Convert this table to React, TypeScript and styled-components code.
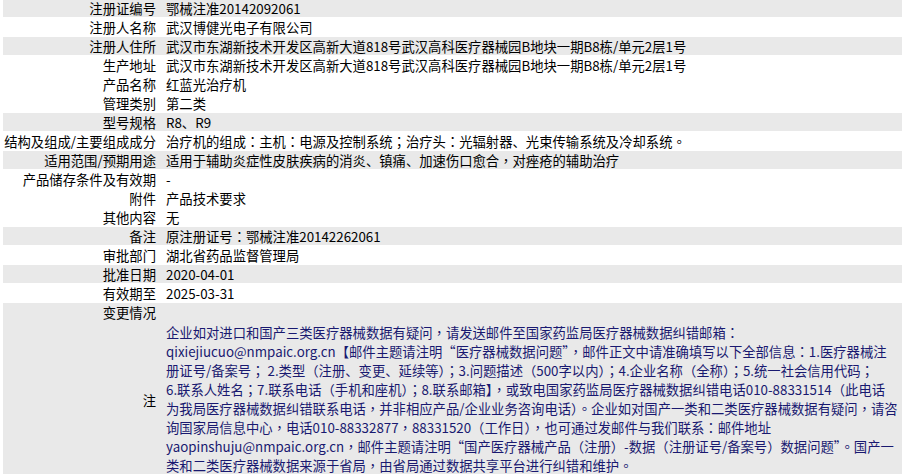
import styled, { createGlobalStyle } from 'styled-components';

const GlobalStyle = createGlobalStyle`
  html, body {
    margin: 0;
    padding: 0;
    background: #fff;
    overflow: hidden;
  }
  body {
    font-family: "Noto Sans CJK SC", "Liberation Sans", sans-serif;
    font-size: 13.33px;
    color: #000;
  }
`;

const Table = styled.div`
  width: 899px;
  margin: -1px 0 0 3px;
  display: flex;
  flex-direction: column;
`;

const Row = styled.div<{ $shade?: boolean; $joined?: boolean }>`
  display: grid;
  grid-template-columns: 157px 1fr;
  align-items: center;
  background: ${(p) => (p.$shade ? '#e9e9e9' : '#fff')};
  border-bottom: 1px solid ${(p) => (p.$joined ? '#e9e9e9' : '#fff')};
`;

const Label = styled.div`
  text-align: right;
  padding: 2px 4px 0 0;
  line-height: 16px;
  white-space: nowrap;
`;

const Value = styled.div`
  padding: 2px 0 0 6px;
  line-height: 16px;
  min-height: 16px;
  white-space: nowrap;
`;

const Notice = styled.div`
  padding: 1px 0 3px 6px;
  color: #191970;
  line-height: 19px;
`;

const NoticeLine = styled.span`
  display: block;
  white-space: nowrap;
`;

// centred full-width punctuation, as in the original rendering
const Punct = styled.span`
  font-family: "Noto Sans CJK TC", "Noto Sans CJK SC", sans-serif;
`;

const withPunct = (text: string) =>
  text.split(/([：；，。])/).map((part, i) =>
    /^[：；，。]$/.test(part) ? <Punct key={i}>{part}</Punct> : part
  );

interface Item {
  label: string;
  value: string;
  shade?: boolean;
}

const items: Item[] = [
  { label: '注册证编号', value: '鄂械注准20142092061', shade: true },
  { label: '注册人名称', value: '武汉博健光电子有限公司' },
  {
    label: '注册人住所',
    value: '武汉市东湖新技术开发区高新大道818号武汉高科医疗器械园B地块一期B8栋/单元2层1号',
    shade: true,
  },
  { label: '生产地址', value: '武汉市东湖新技术开发区高新大道818号武汉高科医疗器械园B地块一期B8栋/单元2层1号' },
  { label: '产品名称', value: '红蓝光治疗机' },
  { label: '管理类别', value: '第二类' },
  { label: '型号规格', value: 'R8、R9', shade: true },
  {
    label: '结构及组成/主要组成成分',
    value: '治疗机的组成：主机：电源及控制系统；治疗头：光辐射器、光束传输系统及冷却系统。',
  },
  {
    label: '适用范围/预期用途',
    value: '适用于辅助炎症性皮肤疾病的消炎、镇痛、加速伤口愈合，对痤疮的辅助治疗',
    shade: true,
  },
  { label: '产品储存条件及有效期', value: '-' },
  { label: '附件', value: '产品技术要求' },
  { label: '其他内容', value: '无' },
  { label: '备注', value: '原注册证号：鄂械注准20142262061', shade: true },
  { label: '审批部门', value: '湖北省药品监督管理局' },
  { label: '批准日期', value: '2020-04-01', shade: true },
  { label: '有效期至', value: '2025-03-31' },
];

const noticeLines: string[] = [
  '企业如对进口和国产三类医疗器械数据有疑问，请发送邮件至国家药监局医疗器械数据纠错邮箱：',
  'qixiejiucuo@nmpaic.org.cn【邮件主题请注明“医疗器械数据问题”，邮件正文中请准确填写以下全部信息：1.医疗器械注',
  '册证号/备案号； 2.类型（注册、变更、延续等）；3.问题描述（500字以内）；4.企业名称（全称）；5.统一社会信用代码；',
  '6.联系人姓名；7.联系电话（手机和座机）；8.联系邮箱】，或致电国家药监局医疗器械数据纠错电话010-88331514（此电话',
  '为我局医疗器械数据纠错联系电话，并非相应产品/企业业务咨询电话）。企业如对国产一类和二类医疗器械数据有疑问，请咨',
  '询国家局信息中心，电话010-88332877，88331520（工作日），也可通过发邮件与我们联系：邮件地址',
  'yaopinshuju@nmpaic.org.cn，邮件主题请注明“国产医疗器械产品（注册）-数据（注册证号/备案号）数据问题”。国产一',
  '类和二类医疗器械数据来源于省局，由省局通过数据共享平台进行纠错和维护。',
];

function App() {
  return (
    <>
      <GlobalStyle />
      <Table>
        {items.map((item, index) => (
          <Row key={index} $shade={item.shade}>
            <Label>{item.label}</Label>
            <Value>{withPunct(item.value)}</Value>
          </Row>
        ))}
        <Row $shade $joined>
          <Label>变更情况</Label>
          <Value />
        </Row>
        <Row $shade>
          <Label>注</Label>
          <Notice>
            {noticeLines.map((line, index) => (
              <NoticeLine key={index}>{withPunct(line)}</NoticeLine>
            ))}
          </Notice>
        </Row>
      </Table>
    </>
  );
}

export default App;
